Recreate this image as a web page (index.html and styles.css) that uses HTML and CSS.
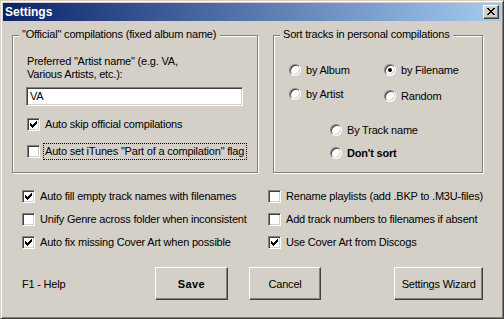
FILE: index.html
```html
<!DOCTYPE html>
<html>
<head>
<meta charset="utf-8">
<title>Settings</title>
<link rel="stylesheet" href="styles.css">
</head>
<body>
<div class="window">
  <div class="titlebar">
    <span class="title">Settings</span>
    <span class="close"><svg width="8" height="7" viewBox="0 0 8 7" shape-rendering="crispEdges"><path d="M0 0h2v1H0z M6 0h2v1H6z M1 1h2v1H1z M5 1h2v1H5z M2 2h4v1H2z M3 3h2v1H3z M2 4h4v1H2z M1 5h2v1H1z M5 5h2v1H5z M0 6h2v1H0z M6 6h2v1H6z" fill="#000"/></svg></span>
  </div>
  <div class="content">
    <div class="groups">
      <div class="group group-left">
        <span class="legend">"Official" compilations (fixed album name)</span>
        <div class="prompt">Preferred "Artist name" (e.g. VA,<br>Various Artists, etc.):</div>
        <div class="textbox">VA</div>
        <div class="check row-first"><span class="box"><svg class="tick" width="7" height="7" viewBox="0 0 7 7" shape-rendering="crispEdges"><path d="M6 0h1v1H6z M5 1h2v1H5z M0 2h1v1H0z M4 2h3v1H4z M0 3h2v1H0z M3 3h3v1H3z M0 4h5v1H0z M1 5h3v1H1z M2 6h1v1H2z"/></svg></span><span class="lbl">Auto skip official compilations</span></div>
        <div class="check row-second"><span class="box"></span><span class="lbl focus">Auto set iTunes "Part of a compilation" flag</span></div>
      </div>
      <div class="group group-right">
        <span class="legend">Sort tracks in personal compilations</span>
        <div class="radio-grid">
          <div class="radio"><span class="dot"></span><span>by Album</span></div>
          <div class="radio"><span class="dot on"></span><span>by Filename</span></div>
          <div class="radio"><span class="dot"></span><span>by Artist</span></div>
          <div class="radio low"><span class="dot"></span><span>Random</span></div>
        </div>
        <div class="radio-stack">
          <div class="radio"><span class="dot"></span><span>By Track name</span></div>
          <div class="radio"><span class="dot"></span><span class="bold">Don't sort</span></div>
        </div>
      </div>
    </div>
    <div class="options">
      <div class="check"><span class="box"><svg class="tick" width="7" height="7" viewBox="0 0 7 7" shape-rendering="crispEdges"><path d="M6 0h1v1H6z M5 1h2v1H5z M0 2h1v1H0z M4 2h3v1H4z M0 3h2v1H0z M3 3h3v1H3z M0 4h5v1H0z M1 5h3v1H1z M2 6h1v1H2z"/></svg></span><span class="lbl">Auto fill empty track names with filenames</span></div>
      <div class="check"><span class="box"></span><span class="lbl">Rename playlists (add .BKP to .M3U-files)</span></div>
      <div class="check"><span class="box"></span><span class="lbl">Unify Genre across folder when inconsistent</span></div>
      <div class="check"><span class="box"></span><span class="lbl">Add track numbers to filenames if absent</span></div>
      <div class="check"><span class="box"><svg class="tick" width="7" height="7" viewBox="0 0 7 7" shape-rendering="crispEdges"><path d="M6 0h1v1H6z M5 1h2v1H5z M0 2h1v1H0z M4 2h3v1H4z M0 3h2v1H0z M3 3h3v1H3z M0 4h5v1H0z M1 5h3v1H1z M2 6h1v1H2z"/></svg></span><span class="lbl">Auto fix missing Cover Art when possible</span></div>
      <div class="check"><span class="box"><svg class="tick" width="7" height="7" viewBox="0 0 7 7" shape-rendering="crispEdges"><path d="M6 0h1v1H6z M5 1h2v1H5z M0 2h1v1H0z M4 2h3v1H4z M0 3h2v1H0z M3 3h3v1H3z M0 4h5v1H0z M1 5h3v1H1z M2 6h1v1H2z"/></svg></span><span class="lbl">Use Cover Art from Discogs</span></div>
    </div>
    <div class="footer">
      <span class="help">F1 - Help</span>
      <div class="btn btn-save">Save</div>
      <div class="btn btn-cancel">Cancel</div>
      <div class="btn btn-wizard">Settings Wizard</div>
    </div>
  </div>
</div>
</body>
</html>
```
FILE: styles.css
```css
html, body {
  margin: 0;
  padding: 0;
  background: #D4D0C8;
}

.window {
  width: 504px;
  height: 319px;
  box-sizing: border-box;
  border: 1px solid;
  border-color: #D4D0C8 #404040 #404040 #D4D0C8;
  box-shadow: inset 1px 1px #fff, inset -1px -1px #808080;
  padding: 2px;
  background: #D4D0C8;
  display: flex;
  flex-direction: column;
  font-family: "Liberation Sans", Arial, sans-serif;
  font-size: 11px;
  letter-spacing: -0.2px;
  color: #000;
}

.titlebar {
  height: 18px;
  flex: none;
  display: flex;
  align-items: center;
  justify-content: space-between;
  padding: 0 2px;
  background: linear-gradient(to right, #0A246A, #A6CAF0);
}

.title {
  color: #fff;
  font-weight: bold;
  font-size: 12px;
  letter-spacing: 0;
}

.close {
  width: 16px;
  height: 14px;
  box-sizing: border-box;
  background: #D4D0C8;
  border: 1px solid;
  border-color: #fff #404040 #404040 #fff;
  box-shadow: inset -1px -1px #808080;
  display: flex;
  align-items: center;
  justify-content: center;
  padding: 0 1px 1px 0;
}

.close svg {
  display: block;
}

.content {
  padding: 14px 18px 0 9px;
  display: flex;
  flex-direction: column;
}

.groups {
  display: flex;
  gap: 15px;
}

.group {
  position: relative;
  box-sizing: border-box;
  height: 138px;
  border: 1px solid #808080;
  box-shadow: inset 1px 1px #fff, 1px 1px #fff;
}

.group-left {
  width: 246px;
  padding: 19px 0 0 14px;
}

.group-right {
  width: 210px;
  padding: 25px 0 0 15px;
}

.legend {
  position: absolute;
  top: -8px;
  left: 6px;
  padding: 0 4px 0 3px;
  line-height: 13px;
  background: #D4D0C8;
  white-space: nowrap;
}

.prompt {
  line-height: 13px;
}

.textbox {
  margin: 6px 0 0 -1px;
  width: 217px;
  height: 19px;
  box-sizing: border-box;
  background: #fff;
  border: 1px solid;
  border-color: #808080 #fff #fff #808080;
  box-shadow: inset 1px 1px #404040, inset -1px -1px #D4D0C8;
  padding: 0 3px;
  line-height: 17px;
}

.check {
  height: 17px;
  display: flex;
  align-items: center;
  gap: 5px;
  white-space: nowrap;
}

.row-first,
.row-second {
  margin-top: 10px;
}

.row-second .lbl {
  margin-left: -1px;
}

.box {
  width: 13px;
  height: 13px;
  flex: none;
  box-sizing: border-box;
  background: #fff;
  border: 1px solid;
  border-color: #808080 #fff #fff #808080;
  box-shadow: inset 1px 1px #404040, inset -1px -1px #D4D0C8;
  display: flex;
  align-items: center;
  justify-content: center;
}

.tick {
  display: block;
  fill: #000;
}

.lbl {
  line-height: 15px;
}

.focus {
  outline: 1px dotted #000;
  padding: 0 2px 0 1px;
}

.radio-grid {
  display: grid;
  grid-template-columns: 95px 1fr;
  row-gap: 7px;
}

.radio-stack {
  margin: 19px 0 0 41px;
  display: flex;
  flex-direction: column;
  gap: 6px;
}

.radio {
  height: 17px;
  display: flex;
  align-items: center;
  gap: 5px;
  white-space: nowrap;
}

.radio.low {
  transform: translateY(2px);
}

.dot {
  width: 12px;
  height: 12px;
  flex: none;
  box-sizing: border-box;
  border-radius: 50%;
  background: #fff;
  border: 1px solid;
  border-color: #808080 #fff #fff #808080;
  box-shadow: inset 1px 1px #404040, inset -1px -1px #D4D0C8;
  display: flex;
  align-items: center;
  justify-content: center;
}

.dot.on::after {
  content: "";
  width: 4px;
  height: 4px;
  border-radius: 50%;
  background: #000;
}

.bold {
  font-weight: bold;
}

.options {
  margin-top: 15px;
  padding-left: 10px;
  display: grid;
  grid-template-columns: 246px 1fr;
  row-gap: 6px;
}

.footer {
  margin-top: 16px;
  padding-left: 10px;
  display: flex;
  align-items: center;
}

.help {
  width: 133px;
  flex: none;
}

.btn {
  height: 33px;
  box-sizing: border-box;
  background: #D4D0C8;
  border: 1px solid;
  border-color: #fff #404040 #404040 #fff;
  box-shadow: inset -1px -1px #808080;
  display: flex;
  align-items: center;
  justify-content: center;
  white-space: nowrap;
}

.btn-save {
  width: 73px;
  font-weight: bold;
  letter-spacing: 0.4px;
}

.btn-cancel {
  width: 73px;
  margin-left: 21px;
}

.btn-wizard {
  width: 89px;
  margin-left: 73px;
}
```
